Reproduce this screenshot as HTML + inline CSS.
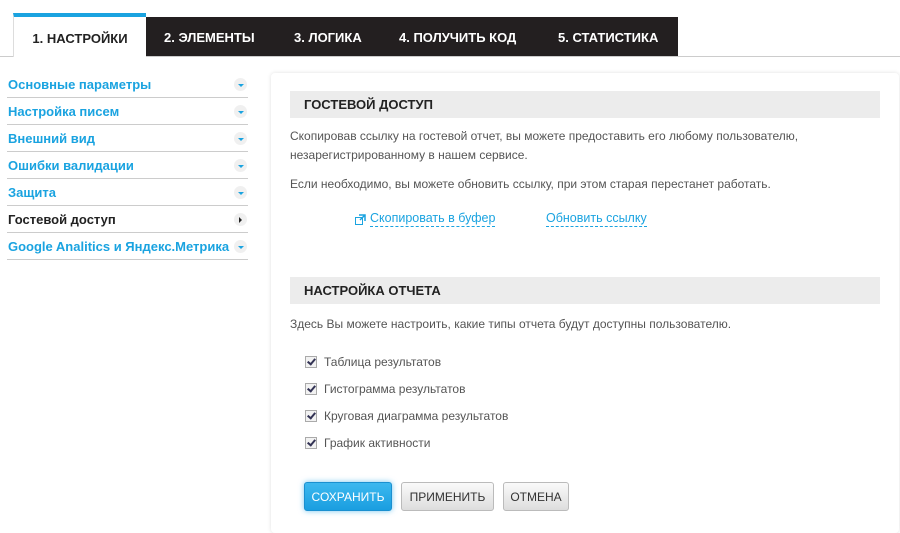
<!DOCTYPE html>
<html><head><meta charset="utf-8"><style>
body{margin:0;width:900px;height:528px;background:#fff;font-family:"Liberation Sans",Arial,sans-serif;position:relative;overflow:hidden}
.abs{position:absolute}
.tabline{left:0;top:56px;width:900px;height:1px;background:#ccc}
.tab0{left:13px;top:13px;width:133px;height:44px;background:#fff;border-left:1px solid #ddd;box-sizing:border-box;border-top:4px solid #1aa3e0;font-weight:bold;font-size:13px;text-align:center;line-height:44px;color:#222}
.bar{left:146px;top:17px;width:532px;height:39px;background:#231f20;color:#fff;font-weight:bold;font-size:13px;line-height:42px}
.bar span{position:absolute;top:0}
.side{left:7px;top:71px;width:241px}
.side div{height:26px;border-bottom:1px solid #ccc;font-size:13px;font-weight:bold;color:#1aa3e0;line-height:28px;padding-left:1px;position:relative}
.side div i{position:absolute;right:1px;top:7px;width:13px;height:13px;border-radius:50%;background:#f0f0f0}
.side div i:after{content:"";position:absolute;left:4px;top:6px;border:3px solid transparent;border-top:3px solid #1aa3e0;border-bottom:0}
.side div.cur{color:#222}
.side div.cur i:after{left:5px;top:4px;border:3px solid transparent;border-left:3px solid #222;border-right:0}
.panel{left:271px;top:73px;width:628px;height:460px;background:#fff;border-radius:4px;box-shadow:0 0 4px rgba(0,0,0,.12)}
.hd{left:290px;width:590px;height:27px;background:#ececec;font-size:13px;font-weight:bold;color:#222;line-height:28px;padding-left:14px;box-sizing:border-box}
.t{font-size:12px;color:#555;left:290px}
.lnk{color:#1aa3e0;font-size:12.5px;border-bottom:1px dashed #1aa3e0;line-height:15px}
.cb{left:305px;width:12px;height:12px;border:1px solid #aaa;background:#f2f2f2;box-sizing:border-box}
.cb:after{content:"";position:absolute;left:3px;top:0px;width:3px;height:6px;border:solid #335;border-width:0 2px 2px 0;transform:rotate(40deg)}
.btn{top:482px;height:29px;border-radius:3px;font-size:12px;text-align:center;line-height:29px;box-sizing:border-box}
.g{background:linear-gradient(#fafafa,#ddd);border:1px solid #bbb;color:#333}
</style></head><body>
<div class="abs tabline"></div>
<div class="abs tab0">1. НАСТРОЙКИ</div>
<div class="abs bar"><span style="left:18px">2. ЭЛЕМЕНТЫ</span><span style="left:148px">3. ЛОГИКА</span><span style="left:253px">4. ПОЛУЧИТЬ КОД</span><span style="left:412px">5. СТАТИСТИКА</span></div>
<div class="abs side">
<div>Основные параметры<i></i></div>
<div>Настройка писем<i></i></div>
<div>Внешний вид<i></i></div>
<div>Ошибки валидации<i></i></div>
<div>Защита<i></i></div>
<div class="cur">Гостевой доступ<i></i></div>
<div>Google Analitics и Яндекс.Метрика<i></i></div>
</div>
<div class="abs panel"></div>
<div class="abs hd" style="top:91px">ГОСТЕВОЙ ДОСТУП</div>
<div class="abs t" style="top:129px">Скопировав ссылку на гостевой отчет, вы можете предоставить его любому пользователю,</div>
<div class="abs t" style="top:148px">незарегистрированному в нашем сервисе.</div>
<div class="abs t" style="top:177px">Если необходимо, вы можете обновить ссылку, при этом старая перестанет работать.</div>
<svg class="abs" style="left:355px;top:214px" width="11" height="11" viewBox="0 0 11 11"><rect x="0.5" y="3.5" width="7" height="7" fill="none" stroke="#1aa3e0"/><path d="M4 1h6v6M10 1L5 6" stroke="#1aa3e0" fill="none" stroke-width="1.5"/></svg>
<div class="abs lnk" style="left:370px;top:211px">Скопировать в буфер</div>
<div class="abs lnk" style="left:546px;top:211px">Обновить ссылку</div>
<div class="abs hd" style="top:277px">НАСТРОЙКА ОТЧЕТА</div>
<div class="abs t" style="top:317px">Здесь Вы можете настроить, какие типы отчета будут доступны пользователю.</div>
<div class="abs cb" style="top:356px"></div><div class="abs t" style="left:324px;top:355px">Таблица результатов</div>
<div class="abs cb" style="top:383px"></div><div class="abs t" style="left:324px;top:382px">Гистограмма результатов</div>
<div class="abs cb" style="top:410px"></div><div class="abs t" style="left:324px;top:409px">Круговая диаграмма результатов</div>
<div class="abs cb" style="top:437px"></div><div class="abs t" style="left:324px;top:436px">График активности</div>
<div class="abs btn" style="left:304px;width:88px;background:linear-gradient(#3cb8ef,#1a9ee0);color:#fff;border:1px solid #1a90d0;box-shadow:0 0 6px rgba(26,160,230,.6)">СОХРАНИТЬ</div>
<div class="abs btn g" style="left:401px;width:93px">ПРИМЕНИТЬ</div>
<div class="abs btn g" style="left:503px;width:66px">ОТМЕНА</div>
</body></html>
